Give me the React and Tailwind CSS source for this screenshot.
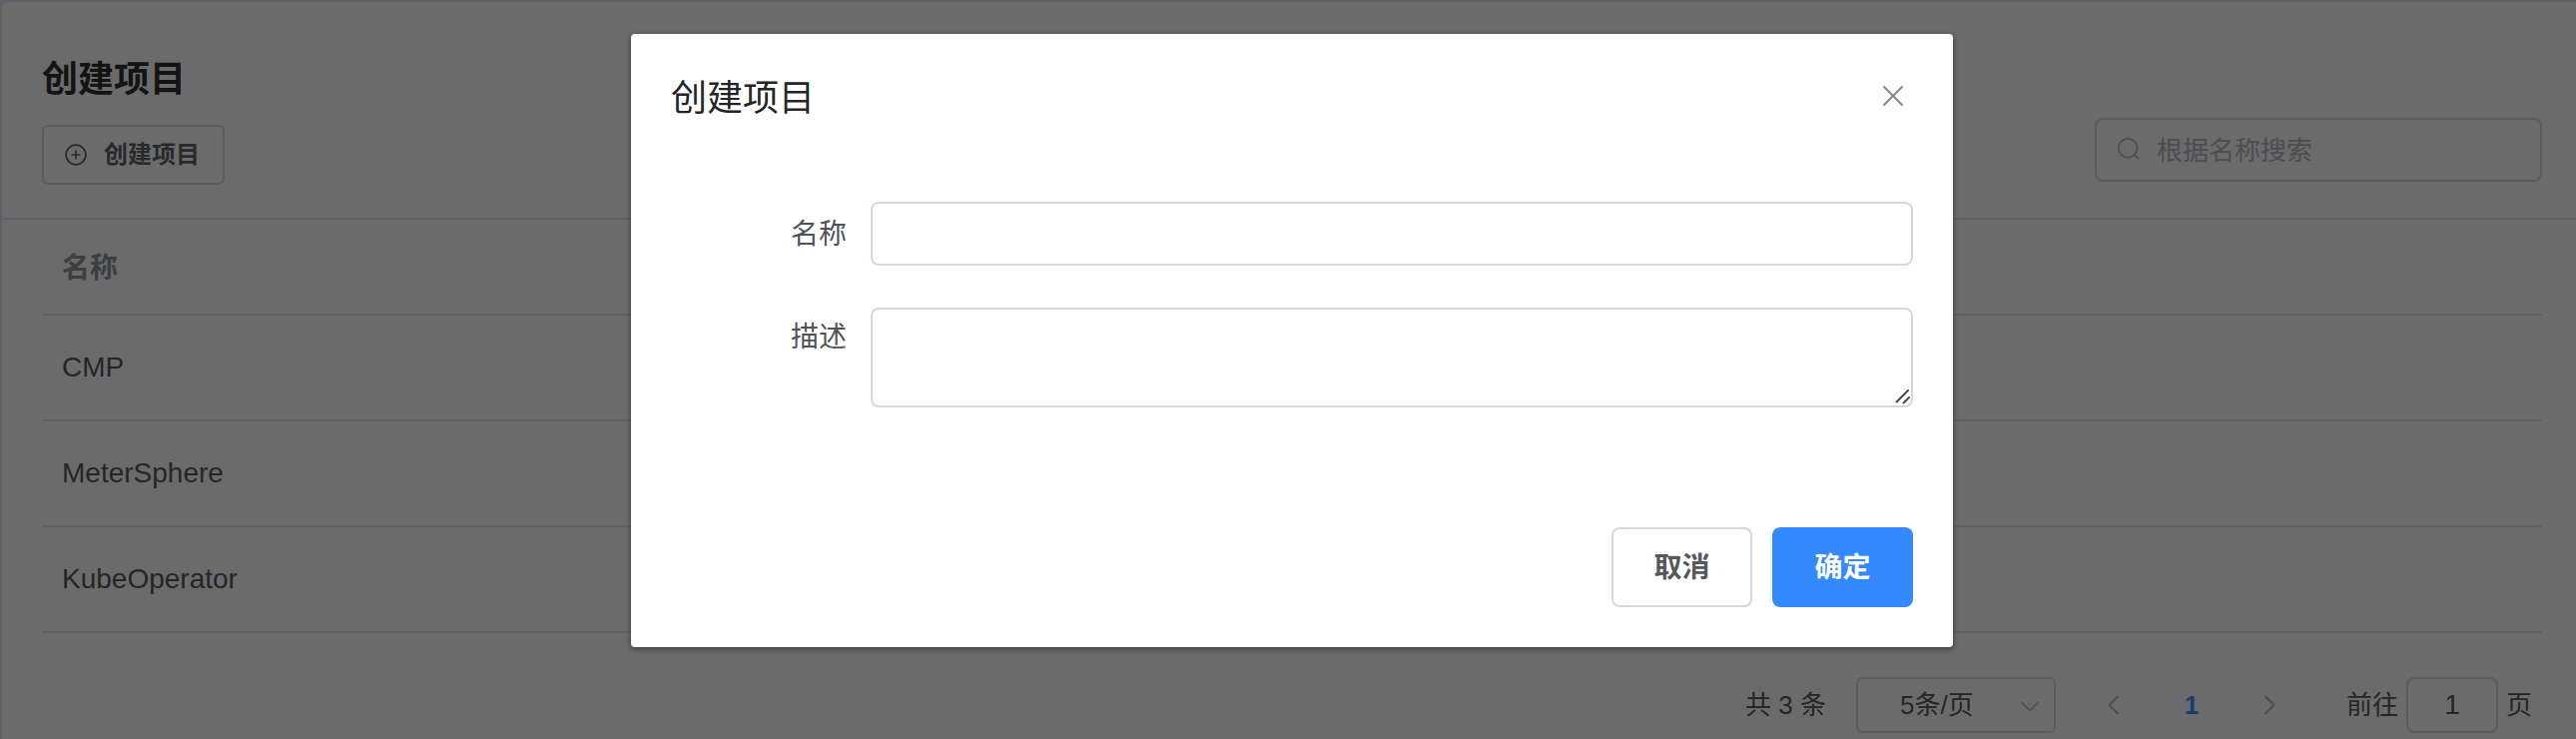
const projects = ["CMP", "MeterSphere", "KubeOperator"];

const BORDER = "border-2 border-[#dadbe8]";

function Stroke({ className, width = 2, children }) {
  return (
    <svg
      className={className}
      viewBox="0 0 28 28"
      fill="none"
      stroke="currentColor"
      strokeWidth={width}
      strokeLinecap="round"
      strokeLinejoin="round"
      aria-hidden="true"
    >
      {children}
    </svg>
  );
}

function Header() {
  return (
    <header className="flex items-end justify-between border-b-2 border-[#dfeaf4] pt-12 pr-[34px] pb-[33px] pl-10">
      <div>
        <h1 className="text-4xl leading-[60px] font-bold text-[#303133]">创建项目</h1>
        <button
          type="button"
          className={`mt-[15px] flex h-[60px] w-[183px] items-center gap-4 rounded-md pl-5 text-2xl leading-6 font-bold text-[#606266] ${BORDER}`}
        >
          <Stroke className="size-6" width={2}>
            <circle cx="14" cy="14" r="11.5" />
            <path d="M14 9.5v9M9.5 14h9" />
          </Stroke>
          创建项目
        </button>
      </div>
      <label className={`mb-[3px] flex h-16 w-[448px] items-center gap-4 rounded-lg px-5 ${BORDER}`}>
        <Stroke className="size-6 shrink-0 text-[#b4b7bf]">
          <circle cx="13" cy="12" r="11" />
          <path d="M21 20l4 4" />
        </Stroke>
        <input
          type="text"
          aria-label="根据名称搜索"
          placeholder="根据名称搜索"
          className="min-w-0 flex-1 bg-transparent pt-0.5 text-[26px] outline-none placeholder:text-[#b4b7bf]"
        />
      </label>
    </header>
  );
}

function ProjectTable() {
  return (
    <div className="pr-[34px] pl-10">
      <table className="w-full border-collapse text-left text-[28px] leading-10">
        <thead>
          <tr className="h-[95px] border-b-2 border-[#dfeaf4]">
            <th className="px-5 pt-1 font-bold text-[#909399]">名称</th>
          </tr>
        </thead>
        <tbody>
          {projects.map((name) => (
            <tr key={name} className="h-[106px] border-b-2 border-[#dfeaf4]">
              <td className="px-5 text-[#585a5e]">{name}</td>
            </tr>
          ))}
        </tbody>
      </table>
    </div>
  );
}

function Pagination() {
  return (
    <nav className="mt-11 flex items-center justify-end pr-11 pb-8 text-[26px] leading-10 text-[#585a5e]">
      <span>共 3 条</span>
      <div className="relative ml-[30px]">
        <select
          aria-label="每页条数"
          className={`h-14 w-[200px] appearance-none rounded-md bg-transparent pl-[42px] text-[26px] ${BORDER}`}
        >
          <option>5条/页</option>
        </select>
        <Stroke className="pointer-events-none absolute top-4 right-3 size-7 text-[#b4b7bf]" width={1.5}>
          <path d="M6 9.5l8 8 8-8" />
        </Stroke>
      </div>
      <button type="button" aria-label="上一页" className="ml-11 text-[#b4b7bf]">
        <Stroke className="size-7">
          <path d="M18 5.5L9.5 14l8.5 8.5" />
        </Stroke>
      </button>
      <button type="button" className="w-[128px] font-bold text-[#4090ff]">
        1
      </button>
      <button type="button" aria-label="下一页" className="text-[#b4b7bf]">
        <Stroke className="size-7">
          <path d="M10 5.5L18.5 14 10 22.5" />
        </Stroke>
      </button>
      <label className="ml-[63px] flex items-center gap-2">
        前往
        <input
          type="text"
          defaultValue="1"
          className={`h-14 w-[92px] rounded-lg bg-transparent text-center text-[28px] ${BORDER}`}
        />
        页
      </label>
    </nav>
  );
}

function CreateDialog() {
  return (
    <form
      role="dialog"
      aria-labelledby="dialog-title"
      className="w-[1324px] rounded-sm bg-white px-10 pt-9 pb-10 shadow-[0_2px_6px_rgba(0,0,0,0.45)]"
    >
      <div className="flex items-start justify-between pr-[6px]">
        <h2 id="dialog-title" className="text-4xl leading-[58px] text-[#242527]">
          创建项目
        </h2>
        <button type="button" aria-label="关闭" className="mt-3 text-[#85878e]">
          <Stroke className="size-7">
            <path d="M5 5l18 18M23 5L5 23" />
          </Stroke>
        </button>
      </div>
      <div className="mt-[74px] grid grid-cols-[176px_1fr] gap-x-6 gap-y-[42px] text-[28px] text-[#505257]">
        <label htmlFor="name" className="pt-0.5 text-right leading-[62px]">
          名称
        </label>
        <input id="name" type="text" className="h-16 w-full rounded-lg border-2 border-[#d3d7e2] px-7" />
        <label htmlFor="description" className="pt-0.5 text-right leading-[56px]">
          描述
        </label>
        <div className="relative">
          <textarea
            id="description"
            className="block h-[100px] w-full resize-none rounded-lg border-2 border-[#d3d7e2] px-7"
          />
          <svg
            className="pointer-events-none absolute right-[2px] bottom-[2px] h-4 w-4"
            viewBox="0 0 16 16"
            stroke="#4a4a4a"
            strokeWidth="2"
            strokeLinecap="round"
            aria-hidden="true"
          >
            <path d="M1.5 12.5L13 1M8.5 13.5L14 8" />
          </svg>
        </div>
      </div>
      <div className="mt-[120px] flex justify-end gap-5 text-[28px] leading-8 font-bold">
        <button
          type="button"
          className="h-20 w-[141px] rounded-lg border-2 border-[#d3d7e2] pt-0.5 text-[#55575c]"
        >
          取消
        </button>
        <button type="submit" className="h-20 w-[141px] rounded-lg bg-[#3489ff] pt-0.5 text-white">
          确定
        </button>
      </div>
    </form>
  );
}

export default function App() {
  return (
    <div className="relative min-h-screen overflow-hidden bg-[#dfeaf4] font-['Liberation_Sans','Noto_Sans_CJK_SC',sans-serif]">
      <main className="rounded-tl-lg border-t-2 border-l-2 border-[#dfeaf4] bg-white">
        <Header />
        <ProjectTable />
        <Pagination />
      </main>
      <div className="absolute inset-0 flex items-start justify-center bg-black/58 pt-[34px] pl-2">
        <CreateDialog />
      </div>
    </div>
  );
}
